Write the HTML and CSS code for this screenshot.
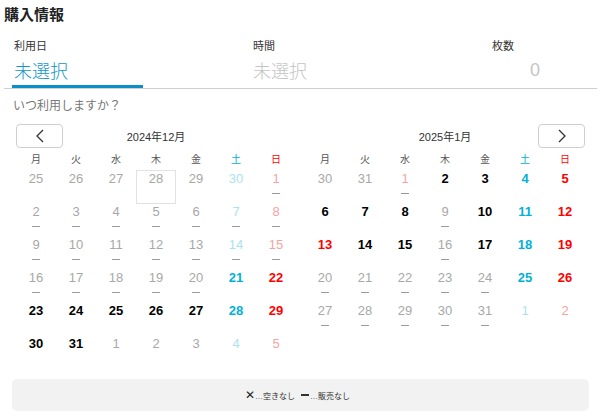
FILE: index.html
```html
<!DOCTYPE html>
<html lang="ja">
<head>
<meta charset="utf-8">
<link rel="stylesheet" href="styles.css">
</head>
<body>
<div class="page">
  <h1 class="title">購入情報</h1>
  <div class="tabs">
    <div class="tab active">
      <div class="tab-label">利用日</div>
      <div class="tab-value">未選択</div>
    </div>
    <div class="tab">
      <div class="tab-label">時間</div>
      <div class="tab-value">未選択</div>
    </div>
    <div class="tab">
      <div class="tab-label">枚数</div>
      <div class="tab-value count">0</div>
    </div>
  </div>
  <p class="question">いつ利用しますか？</p>
  <div class="cals">
    <div class="cal">
      <div class="cal-head">
        <button class="nav"><svg width="10" height="14" viewBox="0 0 10 14"><polyline points="8,1 2,7 8,13" fill="none" stroke="#333" stroke-width="1.3"/></svg></button>
        <div class="cal-title">2024年12月</div>
        <span></span>
      </div>
      <div class="grid">
        <div class="wd">月</div><div class="wd">火</div><div class="wd">水</div><div class="wd">木</div><div class="wd">金</div><div class="wd sat">土</div><div class="wd sun">日</div>

        <div class="d g">25</div><div class="d g">26</div><div class="d g">27</div><div class="d g today">28</div><div class="d g">29</div><div class="d ls">30</div><div class="d lr">1<i></i></div>

        <div class="d g">2<i></i></div><div class="d g">3<i></i></div><div class="d g">4<i></i></div><div class="d g">5<i></i></div><div class="d g">6<i></i></div><div class="d ls">7<i></i></div><div class="d lr">8<i></i></div>

        <div class="d g">9<i></i></div><div class="d g">10<i></i></div><div class="d g">11<i></i></div><div class="d g">12<i></i></div><div class="d g">13<i></i></div><div class="d ls">14<i></i></div><div class="d lr">15<i></i></div>

        <div class="d g">16<i></i></div><div class="d g">17<i></i></div><div class="d g">18<i></i></div><div class="d g">19<i></i></div><div class="d g">20<i></i></div><div class="d s">21</div><div class="d r">22</div>

        <div class="d b">23</div><div class="d b">24</div><div class="d b">25</div><div class="d b">26</div><div class="d b">27</div><div class="d s">28</div><div class="d r">29</div>

        <div class="d b">30</div><div class="d b">31</div><div class="d g">1</div><div class="d g">2</div><div class="d g">3</div><div class="d ls">4</div><div class="d lr">5</div>
      </div>
    </div>
    <div class="cal">
      <div class="cal-head">
        <span></span>
        <div class="cal-title">2025年1月</div>
        <button class="nav"><svg width="10" height="14" viewBox="0 0 10 14"><polyline points="2,1 8,7 2,13" fill="none" stroke="#333" stroke-width="1.3"/></svg></button>
      </div>
      <div class="grid">
        <div class="wd">月</div><div class="wd">火</div><div class="wd">水</div><div class="wd">木</div><div class="wd">金</div><div class="wd sat">土</div><div class="wd sun">日</div>

        <div class="d g">30</div><div class="d g">31</div><div class="d lr">1<i></i></div><div class="d b">2</div><div class="d b">3</div><div class="d s">4</div><div class="d r">5</div>

        <div class="d b">6</div><div class="d b">7</div><div class="d b">8</div><div class="d g">9<i></i></div><div class="d b">10</div><div class="d s">11</div><div class="d r">12</div>

        <div class="d r">13</div><div class="d b">14</div><div class="d b">15</div><div class="d g">16<i></i></div><div class="d b">17</div><div class="d s">18</div><div class="d r">19</div>

        <div class="d g">20<i></i></div><div class="d g">21<i></i></div><div class="d g">22<i></i></div><div class="d g">23<i></i></div><div class="d g">24<i></i></div><div class="d s">25</div><div class="d r">26</div>

        <div class="d g">27<i></i></div><div class="d g">28<i></i></div><div class="d g">29<i></i></div><div class="d g">30<i></i></div><div class="d g">31<i></i></div><div class="d ls">1</div><div class="d lr">2</div>
      </div>
    </div>
  </div>
  <div class="legend">
    <span class="mark">✕</span><span class="ltext">…空きなし</span>
    <span class="bar"></span><span class="ltext">…販売なし</span>
  </div>
</div>
</body>
</html>
```

FILE: styles.css
```css
* { box-sizing: border-box; }
body {
  margin: 0;
  background: #fff;
  font-family: "Liberation Sans", "Noto Sans CJK JP", sans-serif;
  color: #333;
}
.page {
  padding: 0 3px 0 4px;
  width: 600px;
}
.title {
  margin: 0;
  padding-top: 7px;
  font-size: 15px;
  line-height: 16px;
  font-weight: bold;
  color: #222;
}
.tabs {
  margin-top: 16px;
  padding-left: 8px;
  display: grid;
  grid-template-columns: 131px 131px 1fr;
  column-gap: 108px;
  border-bottom: 1px solid #cfcfcf;
}
.tab {
  padding: 0 0 3px 2px;
  border-bottom: 3px solid transparent;
}
.tab.active { border-bottom-color: #0a90c6; }
.tab-label {
  font-size: 11px;
  line-height: 14px;
  color: #333;
}
.tab-value {
  margin-top: 5px;
  font-size: 18px;
  line-height: 24px;
  color: #c4c4c4;
  font-family: "Noto Sans CJK JP", sans-serif;
  font-weight: 300;
}
.tab.active .tab-value { color: #1295c8; }
.tab-value.count {
  padding-left: 38px;
  font-family: "Liberation Sans", sans-serif;
  font-weight: normal;
}
.question {
  margin: 9px 0 0 9px;
  font-size: 12px;
  line-height: 16px;
  color: #777;
}
.cals {
  margin: 10px 0 0 12px;
  display: grid;
  grid-template-columns: 280px 280px;
  column-gap: 9px;
}
.cal-head {
  display: grid;
  grid-template-columns: 47px 1fr 47px;
  height: 24px;
  align-items: center;
}
.nav {
  width: 47px;
  height: 24px;
  padding: 0;
  margin: 0;
  background: #fff;
  border: 1px solid #cfcfcf;
  border-radius: 4px;
  display: flex;
  align-items: center;
  justify-content: center;
}
.cal-title {
  text-align: center;
  font-size: 11px;
  color: #333;
}
.grid {
  margin-top: 2px;
  display: grid;
  grid-template-columns: repeat(7, 40px);
  grid-template-rows: 20px;
  grid-auto-rows: 33px;
}
.wd {
  text-align: center;
  font-size: 10px;
  line-height: 20px;
  color: #555;
}
.wd.sat { color: #00b2d6; }
.wd.sun { color: #ff0000; }
.d {
  display: flex;
  flex-direction: column;
  align-items: center;
  padding-top: 1px;
  font-size: 13px;
  line-height: 16px;
}
.d i {
  display: block;
  width: 8px;
  height: 1px;
  margin-top: 6px;
  background: #9a9a9a;
}
.d.today {
  border: 1px solid #e2e2e2;
  height: 34px;
  padding-top: 0;
}
.g { color: #a8a8a8; }
.ls { color: #a9e3ef; }
.lr { color: #f5a3a3; }
.b { color: #000; font-weight: bold; }
.s { color: #00b2d6; font-weight: bold; }
.r { color: #ff0000; font-weight: bold; }
.legend {
  margin: 11px 8px 0 8px;
  height: 32px;
  background: #f2f2f2;
  border-radius: 5px;
  display: flex;
  align-items: center;
  justify-content: center;
  font-size: 8px;
  color: #333;
}
.mark {
  font-size: 12px;
  line-height: 12px;
  color: #222;
}
.ltext { margin-right: 6px; }
.bar {
  width: 8px;
  height: 2px;
  background: #333;
  margin-right: 1px;
}
```
